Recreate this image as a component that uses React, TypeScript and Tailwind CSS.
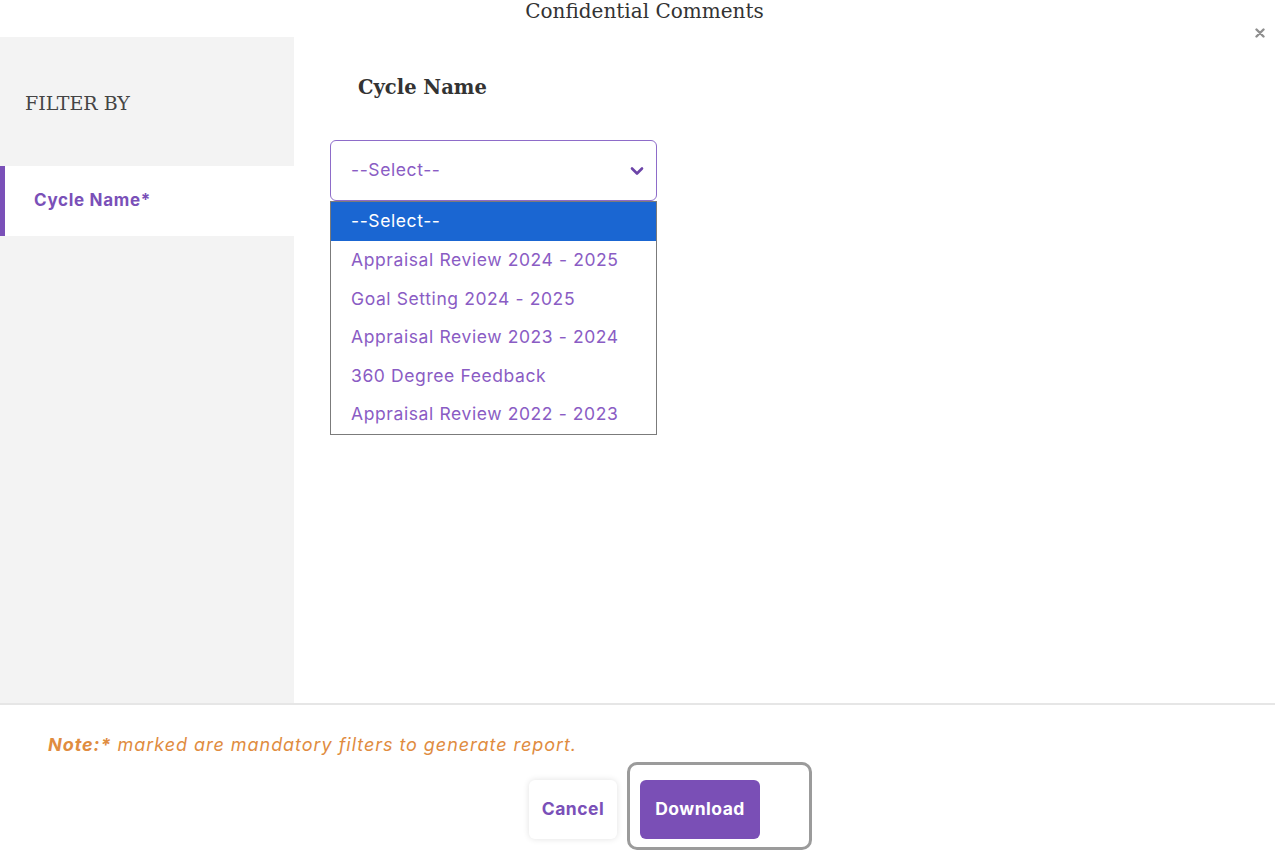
import { useState } from 'react'

const cycles = [
  '--Select--',
  'Appraisal Review 2024 - 2025',
  'Goal Setting 2024 - 2025',
  'Appraisal Review 2023 - 2024',
  '360 Degree Feedback',
  'Appraisal Review 2022 - 2023',
]

const serif = "font-['DejaVu_Serif',serif]"
const sans = "font-['Inter',sans-serif]"

function CycleSelect() {
  const [open, setOpen] = useState(true)
  const [value, setValue] = useState(cycles[0])

  return (
    <div className="w-[327px] text-[17.5px] tracking-[0.6px]">
      <button
        onClick={() => setOpen(!open)}
        className="flex h-[61px] w-full items-center justify-between rounded-[6px] border border-[#8e6cc9] bg-white pl-5 pr-3 text-[#8a5cc4]"
      >
        <span>{value}</span>
        <svg width="14" height="10" viewBox="0 0 14 10" className="text-[#6c44a8]">
          <path d="M2 2.5l5 5 5-5" fill="none" stroke="currentColor" strokeWidth="2.6" strokeLinecap="round" strokeLinejoin="round" />
        </svg>
      </button>
      {open && (
        <ul className="border border-[#7b7b7b] bg-white">
          {cycles.map((c, i) => (
            <li
              key={c}
              onClick={() => { setValue(c); setOpen(false) }}
              className={
                i === 0
                  ? 'flex h-[39px] items-center bg-[#1a66d2] pl-5 text-white'
                  : 'flex h-[38.5px] items-center pl-5 text-[#8a5cc4]'
              }
            >
              {c}
            </li>
          ))}
        </ul>
      )}
    </div>
  )
}

export default function App() {
  return (
    <div className={`flex h-[852px] w-[1275px] flex-col overflow-hidden bg-white ${sans}`}>
      <div className="relative h-[37px] shrink-0">
        <h2 className={`pl-[14px] text-center text-[20px] leading-[22px] text-[#333] ${serif}`}>
          Confidential Comments
        </h2>
        <button className="absolute right-[10px] top-[28px] text-[#8f8f8f]">
          <svg width="10" height="10" viewBox="0 0 10 10">
            <path d="M1.5 1.5l7 7M8.5 1.5l-7 7" stroke="currentColor" strokeWidth="2.4" strokeLinecap="round" />
          </svg>
        </button>
      </div>

      <div className="flex flex-1">
        <aside className="w-[294px] shrink-0 bg-[#f3f3f3]">
          <div className={`flex h-[129px] items-center pl-[25px] pt-[3px] text-[19px] text-[#444] ${serif}`}>
            FILTER BY
          </div>
          <div className="flex h-[70px] items-center border-l-[5px] border-[#7a50b8] bg-white pl-[29px] text-[17px] font-bold tracking-[0.7px] text-[#7a50b8]">
            Cycle Name*
          </div>
        </aside>

        <main className="flex-1 pl-[36px] pt-[37px]">
          <h3 className={`pl-[28px] text-[19.5px] font-bold leading-[28px] text-[#333] ${serif}`}>Cycle Name</h3>
          <div className="mt-[38px]">
            <CycleSelect />
          </div>
        </main>
      </div>

      <footer className="h-[149px] shrink-0 border-t-2 border-[#e6e6e6]">
        <p className="pl-[48px] pt-[26px] text-[18px] italic tracking-[0.95px] text-[#e08c3f]">
          <span className="font-bold">Note:*</span> marked are mandatory filters to generate report.
        </p>
        <div className="mt-[22px] flex justify-center gap-[23px] pl-[14px]">
          <button className="h-[59px] w-[88px] rounded-[6px] bg-white text-[17.5px] font-bold tracking-[0.5px] text-[#7a50b8] shadow-[0_0_6px_rgba(0,0,0,0.12)]">
            Cancel
          </button>
          <div className="relative">
            <button className="h-[59px] w-[120px] rounded-[6px] bg-[#7a4fb6] text-[17.5px] font-bold tracking-[0.5px] text-white">
              Download
            </button>
            <div className="pointer-events-none absolute -left-[13px] -top-[18px] h-[88px] w-[185px] rounded-[10px] border-[3px] border-[#9b9b9b]" />
          </div>
        </div>
      </footer>
    </div>
  )
}
